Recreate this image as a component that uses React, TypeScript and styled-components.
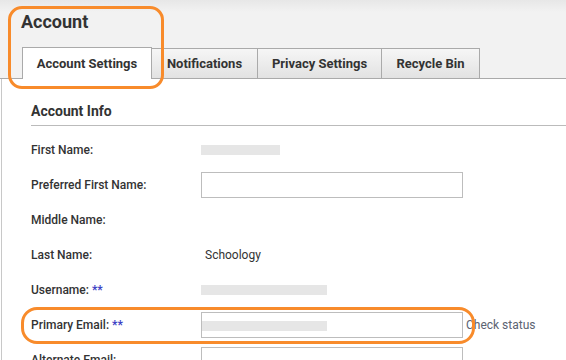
import styled, { createGlobalStyle } from "styled-components";

const GlobalStyle = createGlobalStyle`
  html, body {
    margin: 0;
    padding: 0;
    background: #fff;
    font-family: Roboto, "Liberation Sans", Arial, sans-serif;
    color: #333;
  }
  * {
    box-sizing: border-box;
  }
`;

const ORANGE = "#f88b2b";

const Page = styled.div`
  width: 566px;
  height: 360px;
  overflow: hidden;
  background: #fff;
`;

const Header = styled.header`
  position: relative;
  background: linear-gradient(#e7e7e7 0, #f2f2f2 12px);
  border-bottom: 1px solid #aaa;
`;

const Title = styled.h1`
  margin: 0;
  padding: 11px 0 0 21px;
  font-size: 18px;
  line-height: 22px;
  font-weight: 700;
  color: #333;
`;

const TabRow = styled.nav`
  display: flex;
  align-items: flex-end;
  margin-top: 14px;
  padding-left: 22px;
  height: 31px;
`;

const Tab = styled.div<{ $active?: boolean; $width: number }>`
  display: flex;
  align-items: center;
  justify-content: center;
  width: ${(p) => p.$width}px;
  height: ${(p) => (p.$active ? 32 : 30)}px;
  margin-bottom: ${(p) => (p.$active ? -1 : 0)}px;
  border: 1px solid #aaa;
  border-bottom: ${(p) => (p.$active ? "none" : "0")};
  border-left-width: ${(p) => (p.$active ? 1 : 0)}px;
  background: ${(p) =>
    p.$active ? "#fff" : "linear-gradient(#f6f6f6, #e2e2e2)"};
  font-size: 13px;
  font-weight: 700;
  color: #333;
  white-space: nowrap;
`;

const Highlight = styled.div`
  position: absolute;
  border: 3px solid ${ORANGE};
  border-radius: 15px;
  pointer-events: none;
`;

const HeaderMark = styled(Highlight)`
  left: 8px;
  top: 6px;
  width: 156px;
  height: 83px;
  border-radius: 14px;
`;

const Panel = styled.section`
  margin-left: 1px;
  border-left: 1px solid #c8c8c8;
  padding: 24px 0 0 29px;
  min-height: 282px;
`;

const SectionTitle = styled.h2`
  margin: 0;
  padding-bottom: 5px;
  font-size: 14px;
  line-height: 17px;
  font-weight: 700;
  color: #333;
  border-bottom: 1px solid #bbb;
`;

const Fields = styled.div`
  display: flex;
  flex-direction: column;
  margin-top: 6px;
`;

const Row = styled.div`
  position: relative;
  display: flex;
  align-items: center;
  height: 35px;
`;

const Label = styled.div`
  width: 170px;
  flex-shrink: 0;
  font-size: 12px;
  font-weight: 500;
  color: #333;
`;

const Stars = styled.span`
  color: #3c3fc4;
  font-weight: 700;
`;

const Value = styled.div`
  padding-left: 4px;
  font-size: 12px;
  color: #333;
`;

const Redacted = styled.div<{ $width: number }>`
  width: ${(p) => p.$width}px;
  height: 10px;
  background: #e6e6e6;
`;

const Input = styled.div`
  display: flex;
  align-items: center;
  width: 262px;
  height: 26px;
  border: 1px solid #bdbdbd;
  background: #fff;
  padding-top: 2px;
`;

const StatusLink = styled.span`
  margin-left: 3px;
  font-size: 12px;
  color: #5b6372;
`;

const EmailMark = styled(Highlight)`
  left: -10px;
  top: 0;
  width: 454px;
  height: 37px;
  border-radius: 16px;
`;

const tabs = [
  { label: "Account Settings", width: 130, active: true },
  { label: "Notifications", width: 106 },
  { label: "Privacy Settings", width: 124 },
  { label: "Recycle Bin", width: 98 },
];

const App = () => {
  return (
    <Page>
      <GlobalStyle />
      <Header>
        <Title>Account</Title>
        <TabRow>
          {tabs.map((t) => (
            <Tab key={t.label} $active={t.active} $width={t.width}>
              {t.label}
            </Tab>
          ))}
        </TabRow>
        <HeaderMark />
      </Header>
      <Panel>
        <SectionTitle>Account Info</SectionTitle>
        <Fields>
          <Row>
            <Label>First Name:</Label>
            <Redacted $width={79} />
          </Row>
          <Row>
            <Label>Preferred First Name:</Label>
            <Input />
          </Row>
          <Row>
            <Label>Middle Name:</Label>
          </Row>
          <Row>
            <Label>Last Name:</Label>
            <Value>Schoology</Value>
          </Row>
          <Row>
            <Label>
              Username: <Stars>**</Stars>
            </Label>
            <Redacted $width={126} />
          </Row>
          <Row>
            <Label>
              Primary Email: <Stars>**</Stars>
            </Label>
            <Input>
              <Redacted $width={125} />
            </Input>
            <StatusLink>Check status</StatusLink>
            <EmailMark />
          </Row>
          <Row>
            <Label>Alternate Email:</Label>
            <Input />
          </Row>
        </Fields>
      </Panel>
    </Page>
  );
};

export default App;
